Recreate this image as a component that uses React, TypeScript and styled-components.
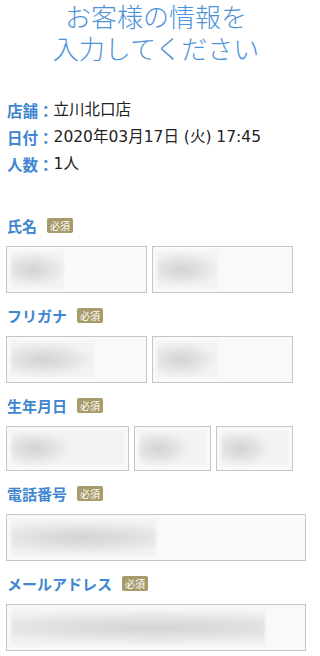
import React from 'react';
import styled, { createGlobalStyle } from 'styled-components';

const GlobalStyle = createGlobalStyle`
  html, body {
    margin: 0;
    padding: 0;
    background: #ffffff;
  }
  body {
    font-family: "Noto Sans CJK JP", "Noto Sans", sans-serif;
    color: #333333;
  }
`;

const Page = styled.main`
  width: 320px;
  padding: 0 14px 0 6px;
  box-sizing: border-box;
`;

const Title = styled.h1`
  margin: 0;
  text-align: center;
  font-size: 26px;
  font-weight: 300;
  line-height: 32px;
  color: #4f93d6;
`;

const TitleLine = styled.span`
  display: block;
`;

const InfoList = styled.dl`
  margin: 33px 0 37px;
  padding: 0 0 0 1px;
`;

const InfoRow = styled.div`
  display: flex;
  font-size: 15.5px;
  line-height: 27px;
`;

const InfoLabel = styled.dt`
  font-weight: 700;
  color: #3f86d0;
`;

const InfoValue = styled.dd`
  margin: 0;
  color: #222222;
  font-family: "DejaVu Sans", "Noto Sans CJK JP", sans-serif;
`;

const Field = styled.section`
  margin-bottom: 12px;
`;

const LabelRow = styled.div`
  display: flex;
  align-items: center;
  height: 20px;
  margin-bottom: 11px;
  padding-left: 1px;
`;

const Label = styled.label`
  font-size: 15px;
  font-weight: 700;
  color: #3f86d0;
`;

const Badge = styled.span`
  margin-left: 10px;
  padding: 0 3px;
  height: 15px;
  line-height: 15px;
  font-size: 10px;
  color: #ffffff;
  background: #a89b6b;
  border-radius: 2px;
`;

const InputRow = styled.div`
  display: flex;
  gap: 5px;
`;

const Box = styled.div<{ $w: number; $h?: number }>`
  width: ${(p) => p.$w}px;
  height: ${(p) => p.$h ?? 47}px;
  box-sizing: border-box;
  border: 1px solid #c6c6c6;
  background: #f9f9f9;
  padding: 4px;
  display: flex;
`;

const Blur = styled.span<{ $w: number; $blob: number }>`
  width: ${(p) => p.$w}px;
  height: 100%;
  background:
    radial-gradient(ellipse ${(p) => p.$blob}px 17px at ${(p) => p.$blob * 0.65}px 50%, #d3d3d3 0%, rgba(211, 211, 211, 0.6) 45%, rgba(211, 211, 211, 0) 100%),
    #f2f2f2;
  filter: blur(1.5px);
`;

type Input = { w: number; blur: number; blob: number };

const fields: { label: string; h?: number; inputs: Input[] }[] = [
  { label: '氏名', inputs: [{ w: 141, blur: 53, blob: 34 }, { w: 141, blur: 61, blob: 38 }] },
  { label: 'フリガナ', inputs: [{ w: 141, blur: 83, blob: 50 }, { w: 141, blur: 61, blob: 36 }] },
  {
    label: '生年月日',
    h: 45,
    inputs: [
      { w: 123, blur: 113, blob: 36 },
      { w: 77, blur: 70, blob: 30 },
      { w: 77, blur: 70, blob: 30 },
    ],
  },
  { label: '電話番号', inputs: [{ w: 300, blur: 145, blob: 110 }] },
  { label: 'メールアドレス', inputs: [{ w: 300, blur: 254, blob: 220 }] },
];

const App: React.FC = () => {
  return (
    <>
      <GlobalStyle />
      <Page>
        <Title>
          <TitleLine>お客様の情報を</TitleLine>
          <TitleLine>入力してください</TitleLine>
        </Title>
        <InfoList>
          <InfoRow>
            <InfoLabel>店舗：</InfoLabel>
            <InfoValue>立川北口店</InfoValue>
          </InfoRow>
          <InfoRow>
            <InfoLabel>日付：</InfoLabel>
            <InfoValue>2020年03月17日 (火) 17:45</InfoValue>
          </InfoRow>
          <InfoRow>
            <InfoLabel>人数：</InfoLabel>
            <InfoValue>1人</InfoValue>
          </InfoRow>
        </InfoList>
        {fields.map((f) => (
          <Field key={f.label}>
            <LabelRow>
              <Label>{f.label}</Label>
              <Badge>必須</Badge>
            </LabelRow>
            <InputRow>
              {f.inputs.map((inp, i) => (
                <Box key={i} $w={inp.w} $h={f.h}>
                  <Blur $w={inp.blur} $blob={inp.blob} />
                </Box>
              ))}
            </InputRow>
          </Field>
        ))}
      </Page>
    </>
  );
};

export default App;
